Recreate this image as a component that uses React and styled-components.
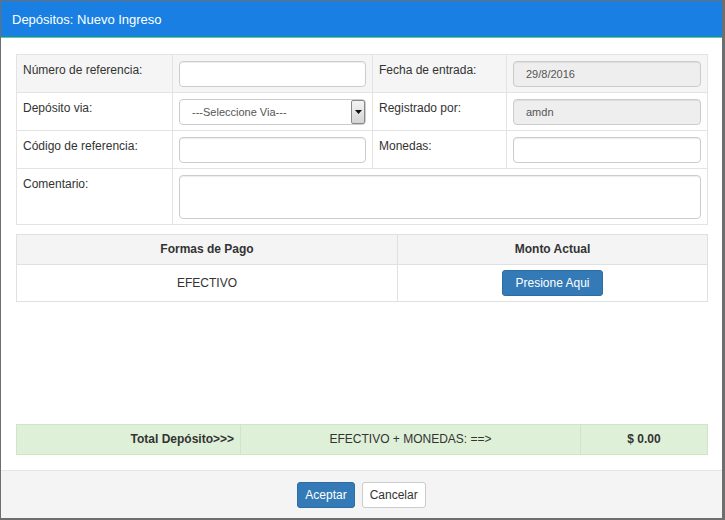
import React from 'react';
import styled, { createGlobalStyle } from 'styled-components';

const GlobalStyle = createGlobalStyle`
  html, body {
    margin: 0;
    padding: 0;
    background: #ffffff;
  }
  body {
    font-family: "Liberation Sans", Arial, sans-serif;
    color: #333333;
  }
  * {
    box-sizing: border-box;
  }
`;

const formRows = [
  {
    label: 'Número de referencia:',
    field: { type: 'input' },
    label2: 'Fecha de entrada:',
    field2: { type: 'input', value: '29/8/2016', disabled: true },
    striped: true,
  },
  {
    label: 'Depósito via:',
    field: { type: 'select', value: '---Seleccione Via---' },
    label2: 'Registrado por:',
    field2: { type: 'input', value: 'amdn', disabled: true },
  },
  {
    label: 'Código de referencia:',
    field: { type: 'input' },
    label2: 'Monedas:',
    field2: { type: 'input' },
  },
];

const Field = ({ field }) => {
  if (field.type === 'select') {
    return (
      <SelectBox>
        <SelectText>{field.value}</SelectText>
        <SelectArrow>
          <svg width="7" height="4" viewBox="0 0 7 4">
            <path d="M0 0h7L3.5 4z" fill="#111" />
          </svg>
        </SelectArrow>
      </SelectBox>
    );
  }
  return <TextInput data-disabled={field.disabled}>{field.value}</TextInput>;
};

export default function App() {
  return (
    <>
      <GlobalStyle />
      <Frame>
        <Header>Depósitos: Nuevo Ingreso</Header>
        <Body>
          <FormTable>
            <colgroup>
              <col style={{ width: 156 }} />
              <col style={{ width: 200 }} />
              <col style={{ width: 134 }} />
              <col style={{ width: 201 }} />
            </colgroup>
            <tbody>
              {formRows.map((row) => (
                <FormRow key={row.label} data-striped={row.striped}>
                  <LabelCell>{row.label}</LabelCell>
                  <InputCell>
                    <Field field={row.field} />
                  </InputCell>
                  <LabelCell>{row.label2}</LabelCell>
                  <InputCell>
                    <Field field={row.field2} />
                  </InputCell>
                </FormRow>
              ))}
              <FormRow>
                <LabelCell>Comentario:</LabelCell>
                <InputCell colSpan={3}>
                  <TextArea />
                </InputCell>
              </FormRow>
            </tbody>
          </FormTable>

          <PayTable>
            <colgroup>
              <col style={{ width: 381 }} />
              <col style={{ width: 310 }} />
            </colgroup>
            <thead>
              <tr>
                <PayHead>Formas de Pago</PayHead>
                <PayHead>Monto Actual</PayHead>
              </tr>
            </thead>
            <tbody>
              <tr>
                <PayCell>EFECTIVO</PayCell>
                <PayCell>
                  <Button data-variant="primary" data-wide>
                    Presione Aqui
                  </Button>
                </PayCell>
              </tr>
            </tbody>
          </PayTable>

          <TotalTable>
            <colgroup>
              <col style={{ width: 224 }} />
              <col style={{ width: 340 }} />
              <col style={{ width: 127 }} />
            </colgroup>
            <tbody>
              <tr>
                <TotalCell data-align="right" data-bold>
                  Total Depósito&gt;&gt;&gt;
                </TotalCell>
                <TotalCell>EFECTIVO + MONEDAS: ==&gt;</TotalCell>
                <TotalCell data-bold>$ 0.00</TotalCell>
              </tr>
            </tbody>
          </TotalTable>
        </Body>
        <Footer>
          <Button data-variant="primary">Aceptar</Button>
          <Button>Cancelar</Button>
        </Footer>
      </Frame>
    </>
  );
}

const Frame = styled.div`
  width: 725px;
  height: 520px;
  display: flex;
  flex-direction: column;
  border-left: 1px solid #6e6e6e;
  border-right: 3px solid #6e6e6e;
  border-bottom: 2px solid #6e6e6e;
  border-top: 1px solid #6e6e6e;
  background: #ffffff;
`;

const Header = styled.div`
  height: 37px;
  flex-shrink: 0;
  display: flex;
  align-items: center;
  padding-left: 11px;
  background: #1a7fe3;
  border-bottom: 1px solid #5fd35f;
  color: #ffffff;
  font-size: 13px;
`;

const Body = styled.div`
  flex: 1;
  display: flex;
  flex-direction: column;
  padding: 16px 14px 15px 15px;
`;

const GridTable = styled.table`
  width: 692px;
  table-layout: fixed;
  border-collapse: separate;
  border-spacing: 0;
  font-size: 12px;
`;

const FormTable = styled(GridTable)`
  border-right: 1px solid #e3e3e3;
  border-bottom: 1px solid #e3e3e3;
`;

const FormRow = styled.tr`
  background: ${(props) => (props['data-striped'] ? '#f5f5f5' : '#ffffff')};
`;

const LabelCell = styled.td`
  vertical-align: top;
  padding: 7px 6px 0;
  border-top: 1px solid #e3e3e3;
  border-left: 1px solid #e3e3e3;
  line-height: 17px;
`;

const InputCell = styled.td`
  vertical-align: top;
  padding: 6px 6px 5px;
  border-top: 1px solid #e3e3e3;
  border-left: 1px solid #e3e3e3;
`;

const fieldBox = `
  height: 26px;
  width: 100%;
  display: flex;
  align-items: center;
  border: 1px solid #cccccc;
  border-radius: 4px;
  font-size: 11px;
  color: #555555;
`;

const TextInput = styled.div`
  ${fieldBox}
  padding: 0 12px;
  background: ${(props) => (props['data-disabled'] ? '#eeeeee' : '#ffffff')};
  box-shadow: inset 0 1px 1px rgba(0, 0, 0, 0.075);
`;

const SelectBox = styled.div`
  ${fieldBox}
  justify-content: space-between;
  padding-left: 12px;
  background: #ffffff;
`;

const SelectText = styled.span`
  line-height: 1;
`;

const SelectArrow = styled.span`
  width: 14px;
  height: 24px;
  display: flex;
  align-items: center;
  justify-content: center;
  border: 1px solid #8a8a8a;
  border-radius: 2px;
  background: linear-gradient(#f4f4f4, #d4d4d4);
`;

const TextArea = styled.div`
  height: 44px;
  width: 100%;
  border: 1px solid #cccccc;
  border-radius: 4px;
  box-shadow: inset 0 1px 1px rgba(0, 0, 0, 0.075);
`;

const PayTable = styled(GridTable)`
  margin-top: 9px;
  border-right: 1px solid #e0e0e0;
  border-bottom: 1px solid #e0e0e0;
`;

const PayHead = styled.th`
  padding: 7px 6px 7px;
  line-height: 15px;
  background: #f4f4f4;
  border-top: 1px solid #e0e0e0;
  border-left: 1px solid #e0e0e0;
  font-weight: bold;
  text-align: center;
`;

const PayCell = styled.td`
  padding: 5px 6px 5px;
  border-top: 1px solid #e0e0e0;
  border-left: 1px solid #e0e0e0;
  text-align: center;
  vertical-align: middle;
`;

const TotalTable = styled(GridTable)`
  margin-top: auto;
  border-right: 1px solid #d0e4c6;
  border-bottom: 1px solid #d0e4c6;
`;

const TotalCell = styled.td`
  padding: 7px 6px 7px;
  line-height: 15px;
  background: #dff0d8;
  border-top: 1px solid #d0e4c6;
  border-left: 1px solid #d0e4c6;
  text-align: ${(props) => props['data-align'] || 'center'};
  font-weight: ${(props) => (props['data-bold'] ? 'bold' : 'normal')};
`;

const Footer = styled.div`
  height: 48px;
  flex-shrink: 0;
  display: flex;
  align-items: center;
  justify-content: center;
  gap: 7px;
  background: #f4f4f4;
  border-top: 1px solid #e5e5e5;
`;

const Button = styled.button`
  height: 26px;
  display: block;
  margin: 0 auto;
  padding: ${(props) => (props['data-wide'] ? '0 12px' : '0 7px')};
  border-radius: 3px;
  font-family: "Liberation Sans", Arial, sans-serif;
  font-size: 12px;
  border: 1px solid
    ${(props) => (props['data-variant'] === 'primary' ? '#2e6da4' : '#cccccc')};
  background: ${(props) =>
    props['data-variant'] === 'primary' ? '#337ab7' : '#ffffff'};
  color: ${(props) => (props['data-variant'] === 'primary' ? '#ffffff' : '#333333')};

  ${Footer} & {
    margin: 0;
  }
`;
